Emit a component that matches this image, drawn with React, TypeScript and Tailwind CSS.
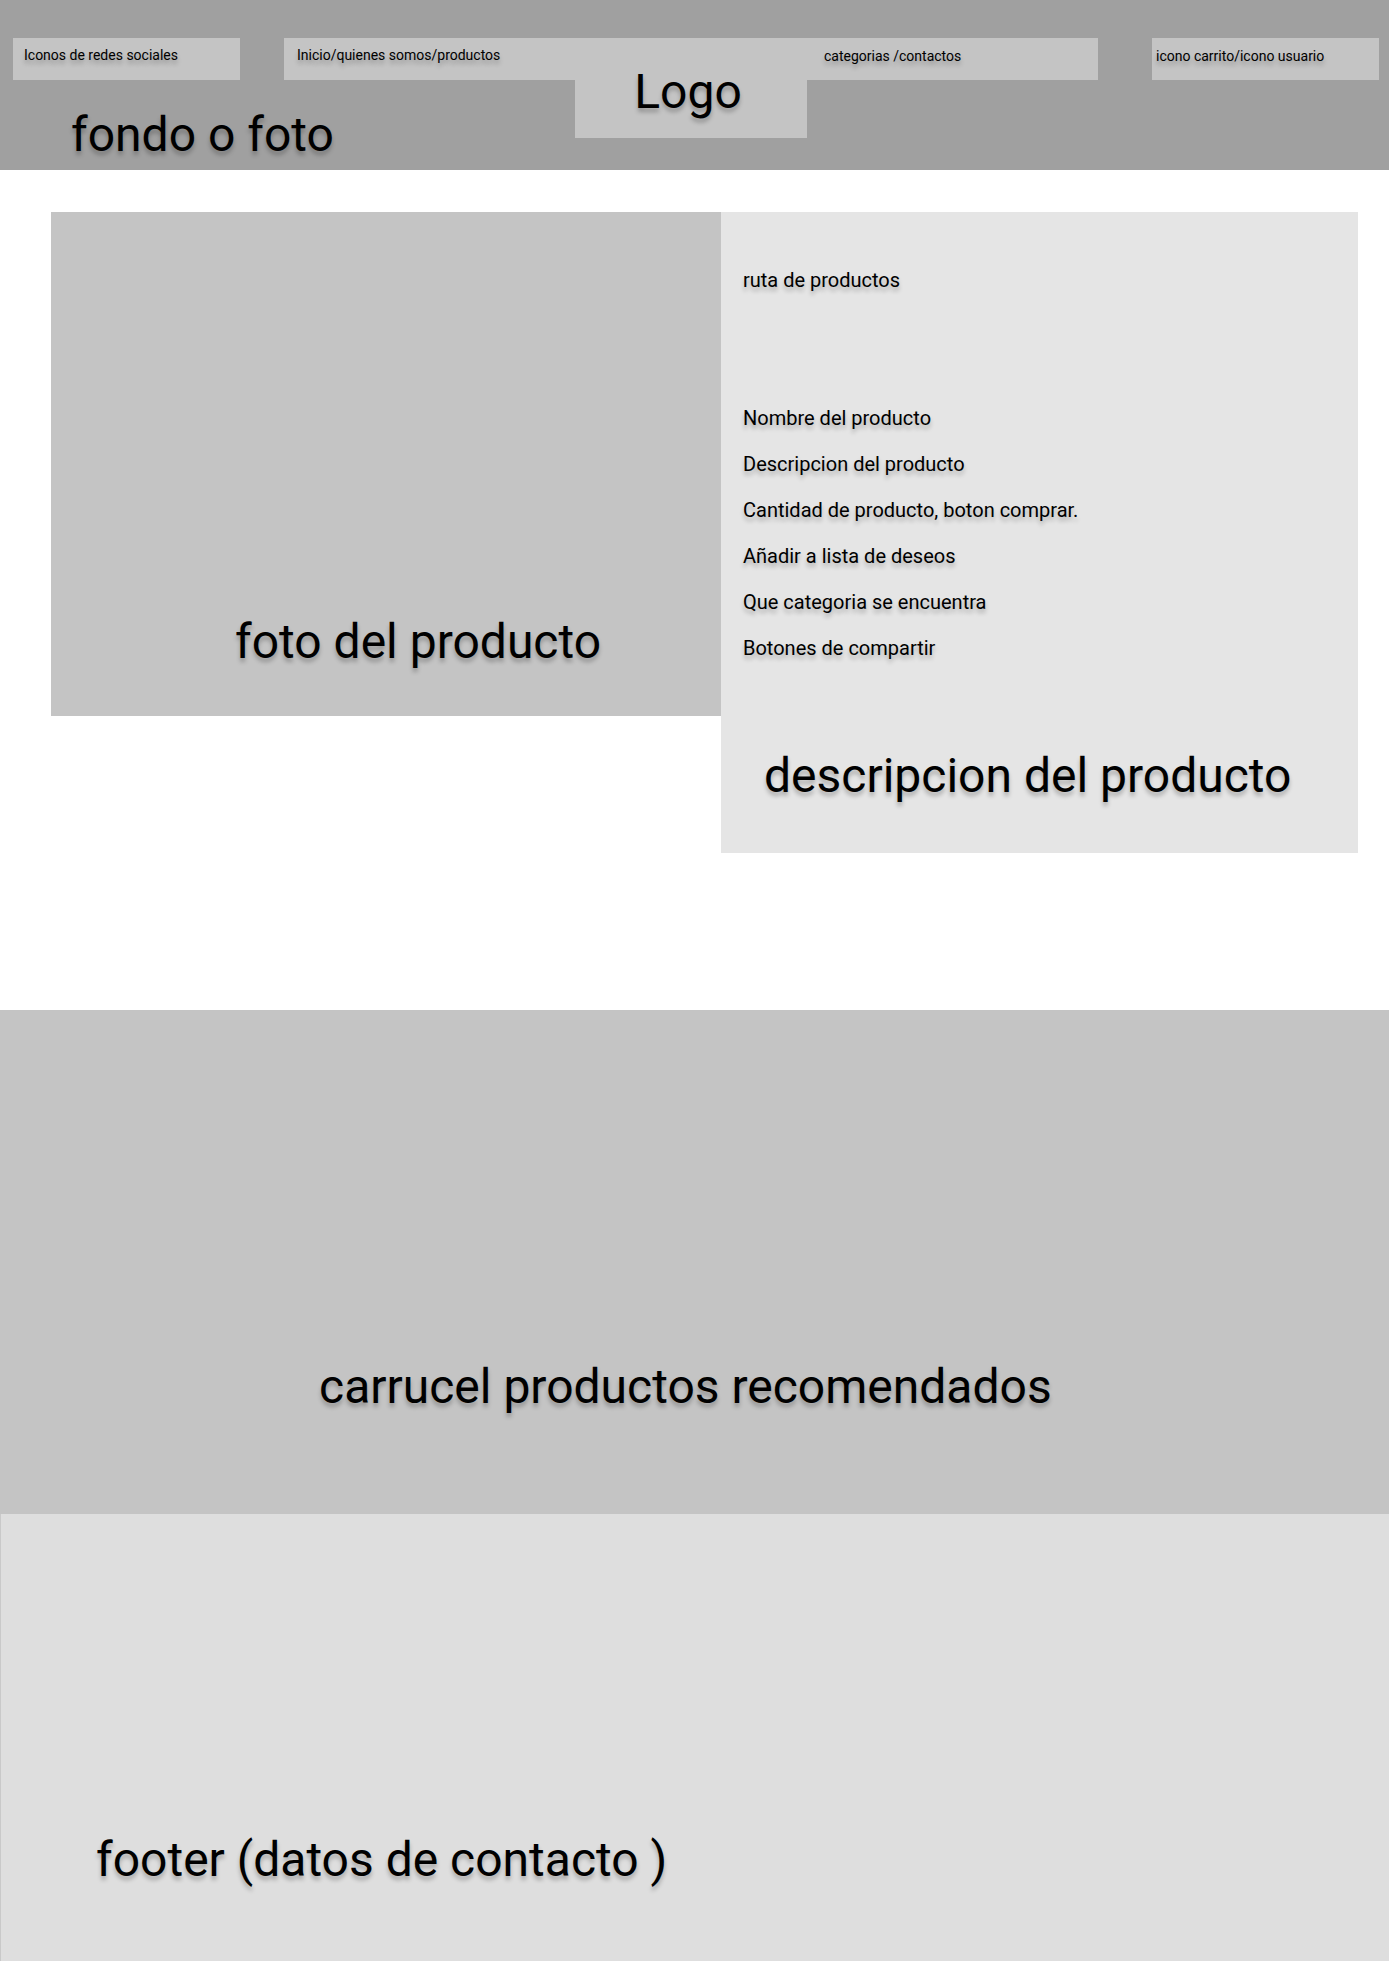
import React from "react";

const shadow = "[text-shadow:0px_4px_4px_rgba(0,0,0,0.25)]";

export default function App() {
  return (
    <div className="w-[1389px] bg-white text-black" style={{ fontFamily: "Roboto, 'Noto Sans', sans-serif" }}>
      {/* Header */}
      <header className="relative h-[170px] bg-[#a0a0a0] flex flex-col">
        <div className="flex pt-[38px] pl-[13px]">
          <div className="w-[227px] h-[42px] bg-[#c4c4c4] pl-[11px] pt-[9px]">
            <span className={`block text-[14px] leading-[16px] ${shadow}`}>Iconos de redes sociales</span>
          </div>
          <div className="ml-[44px] w-[814px] h-[42px] bg-[#c4c4c4] flex">
            <span className={`block w-[540px] pl-[13px] pt-[9px] text-[14px] leading-[16px] ${shadow}`}>
              Inicio/quienes somos/productos
            </span>
            <span className={`block pt-[10px] text-[14px] leading-[16px] ${shadow}`}>categorias /contactos</span>
          </div>
          <div className="ml-[54px] w-[227px] h-[42px] bg-[#c4c4c4] pl-[4px] pt-[10px]">
            <span className={`block text-[14px] leading-[16px] ${shadow}`}>icono carrito/icono usuario</span>
          </div>
        </div>
        <div className={`mt-[27px] pl-[71px] text-[48px] leading-[56px] ${shadow}`}>fondo o foto</div>
        <div className="absolute left-[575px] top-[38px] w-[232px] h-[100px] bg-[#c4c4c4] pt-[26px] pr-[6px] text-center">
          <span className={`block text-[48px] leading-[56px] ${shadow}`}>Logo</span>
        </div>
      </header>

      {/* Main product section */}
      <section className="h-[840px] flex items-start pt-[42px] pl-[51px]">
        <div className="w-[670px] h-[504px] bg-[#c4c4c4] pt-[402px] pl-[184px]">
          <div className={`text-[48px] leading-[56px] whitespace-nowrap ${shadow}`}>foto del producto</div>
        </div>
        <div className="w-[637px] h-[641px] bg-[#e5e5e5] flex flex-col pt-[56px]">
          <div className={`pl-[22px] text-[20px] leading-[24px] ${shadow}`}>ruta de productos</div>
          <div className="mt-[114px] pl-[22px] flex flex-col gap-[22px] text-[20px] leading-[24px]">
            <div className={shadow}>Nombre del producto</div>
            <div className={shadow}>Descripcion del producto</div>
            <div className={shadow}>Cantidad de producto, boton comprar.</div>
            <div className={shadow}>Añadir a lista de deseos</div>
            <div className={shadow}>Que categoria se encuentra</div>
            <div className={shadow}>Botones de compartir</div>
          </div>
          <div className={`mt-[88px] pl-[43px] text-[48px] leading-[56px] whitespace-nowrap ${shadow}`}>
            descripcion del producto
          </div>
        </div>
      </section>

      {/* Carousel */}
      <section className="h-[504px] bg-[#c4c4c4] pt-[349px] pl-[319px]">
        <div className={`text-[48px] leading-[56px] whitespace-nowrap ${shadow}`}>carrucel productos recomendados</div>
      </section>

      {/* Footer */}
      <footer className="h-[447px] bg-[#dedede] border-l border-[#c9c9c9] pt-[318px] pl-[95px]">
        <div className={`text-[48px] leading-[56px] whitespace-nowrap ${shadow}`}>footer (datos de contacto )</div>
      </footer>
    </div>
  );
}
